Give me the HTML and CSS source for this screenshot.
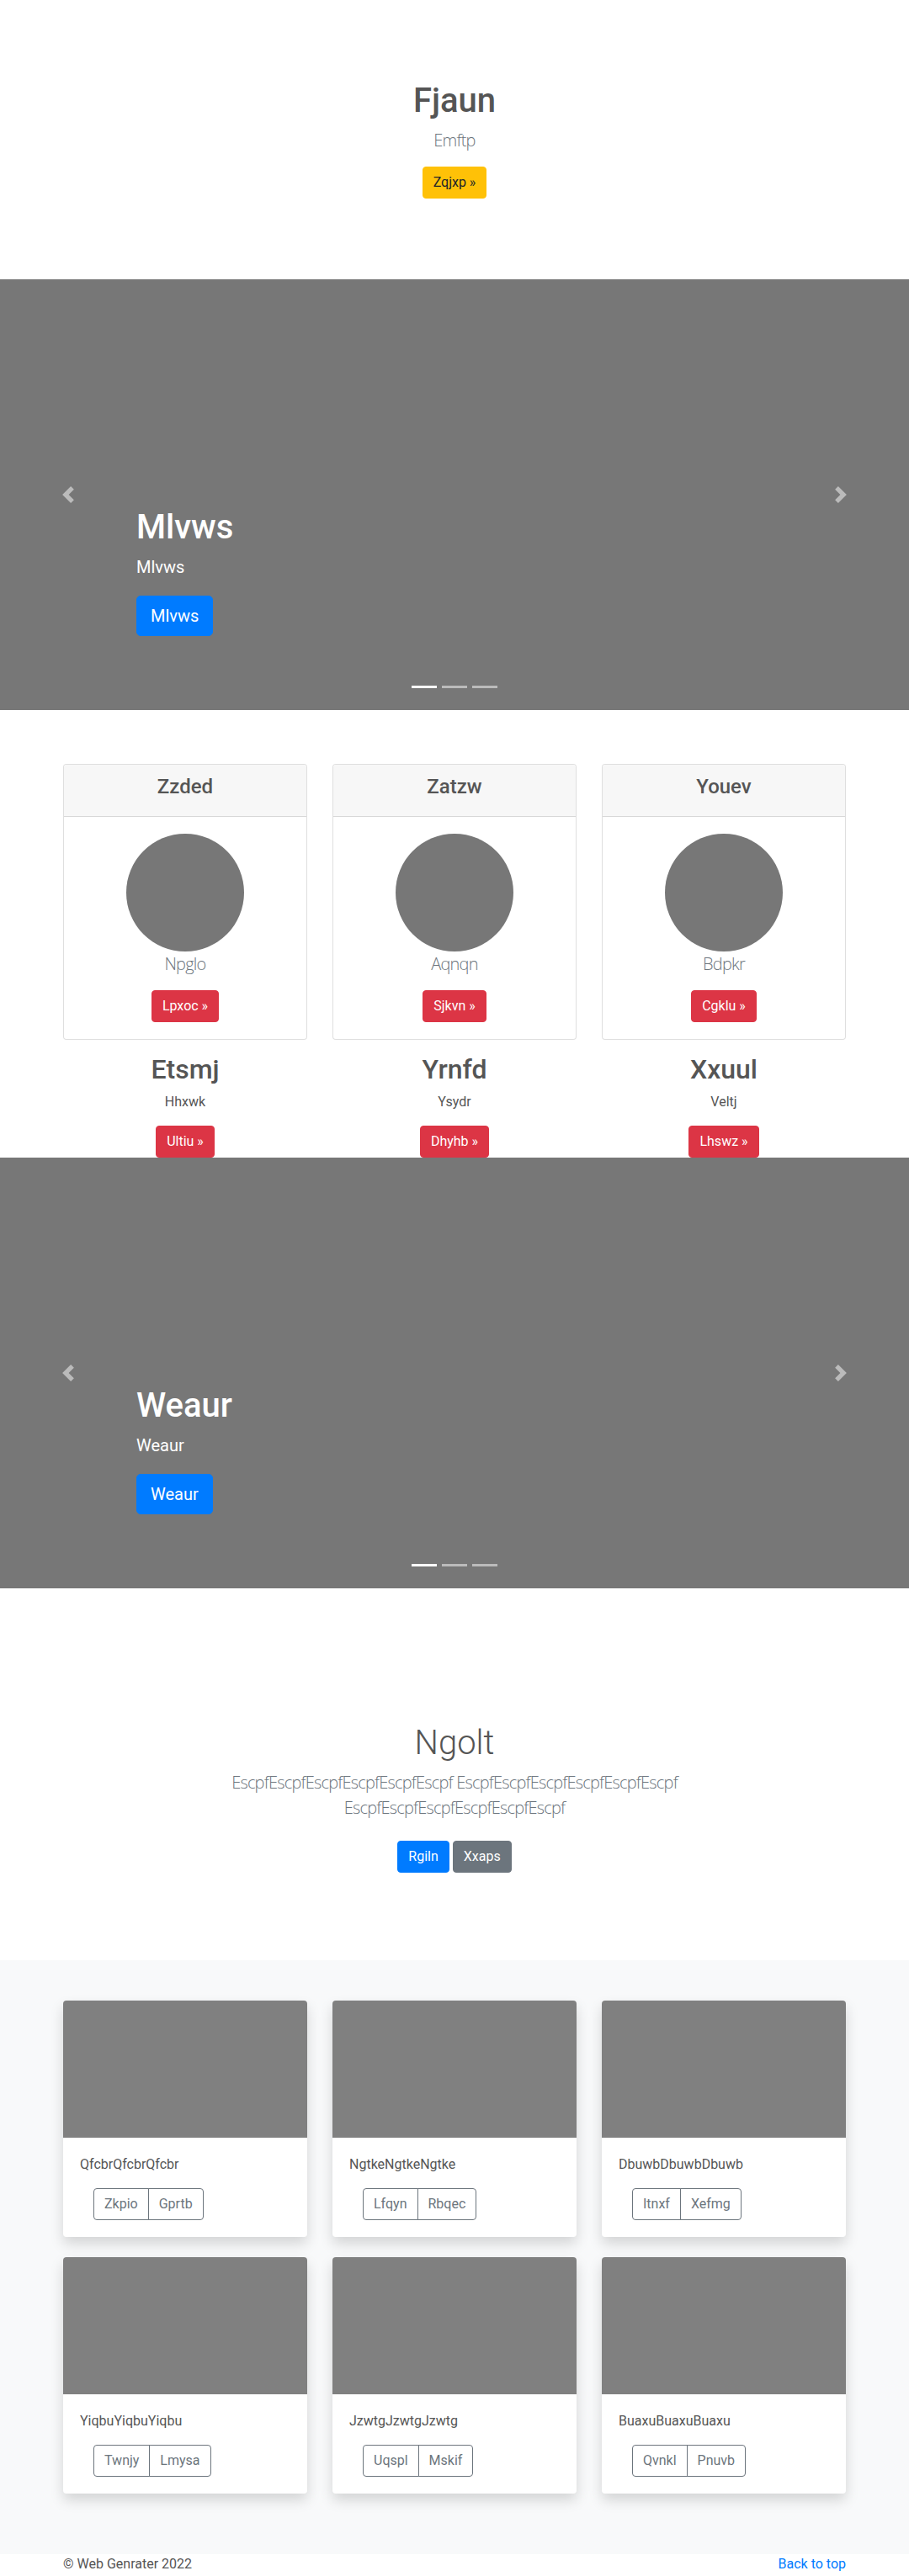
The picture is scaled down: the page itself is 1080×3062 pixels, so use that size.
FILE: index.html
```html
<!DOCTYPE html>
<html lang="en">
<head>
<meta charset="utf-8">
<title>Web Genrater</title>
<link rel="stylesheet" href="styles.css">
</head>
<body>
<main>
  <section class="jumbo">
    <div class="container center">
      <h1 class="jumbo-title">Fjaun</h1>
      <p class="lead muted">Emftp</p>
      <p class="last"><a class="btn btn-warning" href="#">Zqjxp &raquo;</a></p>
    </div>
  </section>

  <div class="carousel">
    <div class="caption">
      <h1 class="caption-title">Mlvws</h1>
      <p class="caption-text">Mlvws</p>
      <p class="last"><a class="btn btn-lg btn-primary" href="#">Mlvws</a></p>
    </div>
    <ol class="indicators"><li class="active"></li><li></li><li></li></ol>
    <a class="ctrl ctrl-prev" href="#"><svg viewBox="0 0 8 8" width="20" height="20"><path fill="#fff" d="M5.25 0l-4 4 4 4 1.5-1.5L4.25 4l2.5-2.5L5.25 0z"/></svg></a>
    <a class="ctrl ctrl-next" href="#"><svg viewBox="0 0 8 8" width="20" height="20"><path fill="#fff" d="M2.75 0l-1.5 1.5L3.75 4l-2.5 2.5L2.75 8l4-4-4-4z"/></svg></a>
  </div>

  <div class="container">
    <div class="row3">
      <div class="col">
        <div class="card">
          <div class="card-header"><h4 class="card-title">Zzded</h4></div>
          <div class="card-body">
            <div class="circle"></div>
            <p class="lead muted">Npglo</p>
            <p class="last"><a class="btn btn-danger" href="#">Lpxoc &raquo;</a></p>
          </div>
        </div>
        <h2 class="col-title">Etsmj</h2>
        <p>Hhxwk</p>
        <p class="last"><a class="btn btn-danger" href="#">Ultiu &raquo;</a></p>
      </div>
      <div class="col">
        <div class="card">
          <div class="card-header"><h4 class="card-title">Zatzw</h4></div>
          <div class="card-body">
            <div class="circle"></div>
            <p class="lead muted">Aqnqn</p>
            <p class="last"><a class="btn btn-danger" href="#">Sjkvn &raquo;</a></p>
          </div>
        </div>
        <h2 class="col-title">Yrnfd</h2>
        <p>Ysydr</p>
        <p class="last"><a class="btn btn-danger" href="#">Dhyhb &raquo;</a></p>
      </div>
      <div class="col">
        <div class="card">
          <div class="card-header"><h4 class="card-title">Youev</h4></div>
          <div class="card-body">
            <div class="circle"></div>
            <p class="lead muted">Bdpkr</p>
            <p class="last"><a class="btn btn-danger" href="#">Cgklu &raquo;</a></p>
          </div>
        </div>
        <h2 class="col-title">Xxuul</h2>
        <p>Veltj</p>
        <p class="last"><a class="btn btn-danger" href="#">Lhswz &raquo;</a></p>
      </div>
    </div>
  </div>

  <div class="carousel">
    <div class="caption">
      <h1 class="caption-title">Weaur</h1>
      <p class="caption-text">Weaur</p>
      <p class="last"><a class="btn btn-lg btn-primary" href="#">Weaur</a></p>
    </div>
    <ol class="indicators"><li class="active"></li><li></li><li></li></ol>
    <a class="ctrl ctrl-prev" href="#"><svg viewBox="0 0 8 8" width="20" height="20"><path fill="#fff" d="M5.25 0l-4 4 4 4 1.5-1.5L4.25 4l2.5-2.5L5.25 0z"/></svg></a>
    <a class="ctrl ctrl-next" href="#"><svg viewBox="0 0 8 8" width="20" height="20"><path fill="#fff" d="M2.75 0l-1.5 1.5L3.75 4l-2.5 2.5L2.75 8l4-4-4-4z"/></svg></a>
  </div>

  <section class="jumbo">
    <div class="container center">
      <h1 class="jumbo-title light">Ngolt</h1>
      <p class="lead muted narrow">EscpfEscpfEscpfEscpfEscpfEscpf EscpfEscpfEscpfEscpfEscpfEscpf EscpfEscpfEscpfEscpfEscpfEscpf</p>
      <p class="last"><a class="btn btn-primary my2" href="#">Rgiln</a> <a class="btn btn-secondary my2" href="#">Xxaps</a></p>
    </div>
  </section>

  <div class="album">
    <div class="container">
      <div class="row3">
        <div class="acard">
          <div class="thumb"></div>
          <div class="acard-body">
            <p class="card-text">QfcbrQfcbrQfcbr</p>
            <div class="btn-group"><a class="btn btn-outline" href="#">Zkpio</a><a class="btn btn-outline" href="#">Gprtb</a></div>
          </div>
        </div>
        <div class="acard">
          <div class="thumb"></div>
          <div class="acard-body">
            <p class="card-text">NgtkeNgtkeNgtke</p>
            <div class="btn-group"><a class="btn btn-outline" href="#">Lfqyn</a><a class="btn btn-outline" href="#">Rbqec</a></div>
          </div>
        </div>
        <div class="acard">
          <div class="thumb"></div>
          <div class="acard-body">
            <p class="card-text">DbuwbDbuwbDbuwb</p>
            <div class="btn-group"><a class="btn btn-outline" href="#">Itnxf</a><a class="btn btn-outline" href="#">Xefmg</a></div>
          </div>
        </div>
        <div class="acard">
          <div class="thumb"></div>
          <div class="acard-body">
            <p class="card-text">YiqbuYiqbuYiqbu</p>
            <div class="btn-group"><a class="btn btn-outline" href="#">Twnjy</a><a class="btn btn-outline" href="#">Lmysa</a></div>
          </div>
        </div>
        <div class="acard">
          <div class="thumb"></div>
          <div class="acard-body">
            <p class="card-text">JzwtgJzwtgJzwtg</p>
            <div class="btn-group"><a class="btn btn-outline" href="#">Uqspl</a><a class="btn btn-outline" href="#">Mskif</a></div>
          </div>
        </div>
        <div class="acard">
          <div class="thumb"></div>
          <div class="acard-body">
            <p class="card-text">BuaxuBuaxuBuaxu</p>
            <div class="btn-group"><a class="btn btn-outline" href="#">Qvnkl</a><a class="btn btn-outline" href="#">Pnuvb</a></div>
          </div>
        </div>
      </div>
    </div>
  </div>
</main>

<footer class="footer">
  <div class="container footer-row">
    <p>&copy; Web Genrater 2022</p>
    <p><a class="link" href="#">Back to top</a></p>
  </div>
</footer>
</body>
</html>
```

FILE: styles.css
```css
* { box-sizing: border-box; }

html, body {
  margin: 0;
  padding: 0;
}

body {
  font-family: Roboto, "Open Sans", "Liberation Sans", sans-serif;
  font-size: 16px;
  line-height: 1.5;
  color: #555;
  background: #fff;
}

p { margin: 0 0 16px; }
p.last { margin-bottom: 0; }

h1, h2, h4 {
  margin: 0 0 8px;
  font-weight: 500;
  line-height: 1.2;
}

a { text-decoration: none; }

.container {
  width: 930px;
  margin: 0 auto;
}

.center { text-align: center; }

.lead {
  font-family: "Open Sans", Roboto, sans-serif;
  font-size: 20px;
  font-weight: 300;
  letter-spacing: -0.04em;
}

.muted { color: #6c757d; }

/* Jumbotron */
.jumbo {
  padding: 96px 0;
}

.jumbo-title {
  font-size: 40px;
}

.jumbo-title.light { font-weight: 300; }

.narrow {
  max-width: 610px;
  margin-left: auto;
  margin-right: auto;
}

/* Buttons */
.btn {
  display: inline-block;
  font-size: 16px;
  font-weight: 400;
  line-height: 1.5;
  padding: 6px 12px;
  border: 1px solid transparent;
  border-radius: 4px;
  text-align: center;
  vertical-align: middle;
  white-space: nowrap;
}

.btn-lg {
  font-size: 20px;
  padding: 8px 16px;
  border-radius: 5px;
}

.my2 { margin: 8px 0; }

.btn-warning { background: #ffc107; border-color: #ffc107; color: #212529; }
.btn-primary { background: #007bff; border-color: #007bff; color: #fff; }
.btn-secondary { background: #6c757d; border-color: #6c757d; color: #fff; }
.btn-danger { background: #dc3545; border-color: #dc3545; color: #fff; }
.btn-outline { background: transparent; border-color: #6c757d; color: #6c757d; }

/* Carousel */
.carousel {
  position: relative;
  height: 512px;
  margin-bottom: 64px;
  background: #777;
  display: flex;
  flex-direction: column;
  justify-content: flex-end;
  padding: 0 15% 88px;
  color: #fff;
}

.caption-title {
  font-size: 40px;
  color: #fff;
}

.caption-text {
  font-size: 20px;
  margin-bottom: 19px;
}

.indicators {
  position: absolute;
  left: 15%;
  right: 15%;
  bottom: 0;
  margin: 0 0 16px;
  padding: 0;
  list-style: none;
  display: flex;
  justify-content: center;
}

.indicators li {
  box-sizing: content-box;
  width: 30px;
  height: 3px;
  margin: 0 3px;
  background: #fff;
  background-clip: padding-box;
  border-top: 10px solid transparent;
  border-bottom: 10px solid transparent;
  opacity: 0.5;
}

.indicators li.active { opacity: 1; }

.ctrl {
  position: absolute;
  top: 0;
  bottom: 0;
  width: 15%;
  display: flex;
  align-items: center;
  justify-content: center;
  opacity: 0.5;
}

.ctrl-prev { left: 0; }
.ctrl-next { right: 0; }
.ctrl svg { display: block; }

/* Three columns */
.row3 {
  display: grid;
  grid-template-columns: repeat(3, 1fr);
  column-gap: 30px;
}

.col { text-align: center; }

.card {
  border: 1px solid rgba(0, 0, 0, 0.125);
  border-radius: 4px;
  margin-bottom: 16px;
  background: #fff;
  overflow: hidden;
}

.card-header {
  background: #f7f7f7;
  border-bottom: 1px solid rgba(0, 0, 0, 0.125);
  padding: 12px 20px;
}

.card-title {
  font-size: 24px;
}

.card-body {
  padding: 20px;
}

.circle {
  width: 140px;
  height: 140px;
  border-radius: 50%;
  background: #777;
  margin: 0 auto;
}

.col-title {
  font-size: 32px;
}

/* Album */
.album {
  background: #f8f9fa;
  padding: 48px 0;
}

.acard {
  background: #fff;
  border-radius: 4px;
  overflow: hidden;
  margin-bottom: 24px;
  box-shadow: 0 8px 16px rgba(0, 0, 0, 0.15);
}

.thumb {
  height: 163px;
  background: #808080;
}

.acard-body {
  padding: 20px;
}

.card-text { margin-bottom: 16px; }

.btn-group {
  display: inline-flex;
  margin-left: 16px;
}

.btn-group .btn:first-child {
  border-top-right-radius: 0;
  border-bottom-right-radius: 0;
}

.btn-group .btn + .btn {
  margin-left: -1px;
  border-top-left-radius: 0;
  border-bottom-left-radius: 0;
}

/* Footer */
.footer {
  padding: 0 0 48px;
}

.footer-row {
  display: flex;
  justify-content: space-between;
}

.footer-row p { margin: 0; }

.link { color: #007bff; }
```
